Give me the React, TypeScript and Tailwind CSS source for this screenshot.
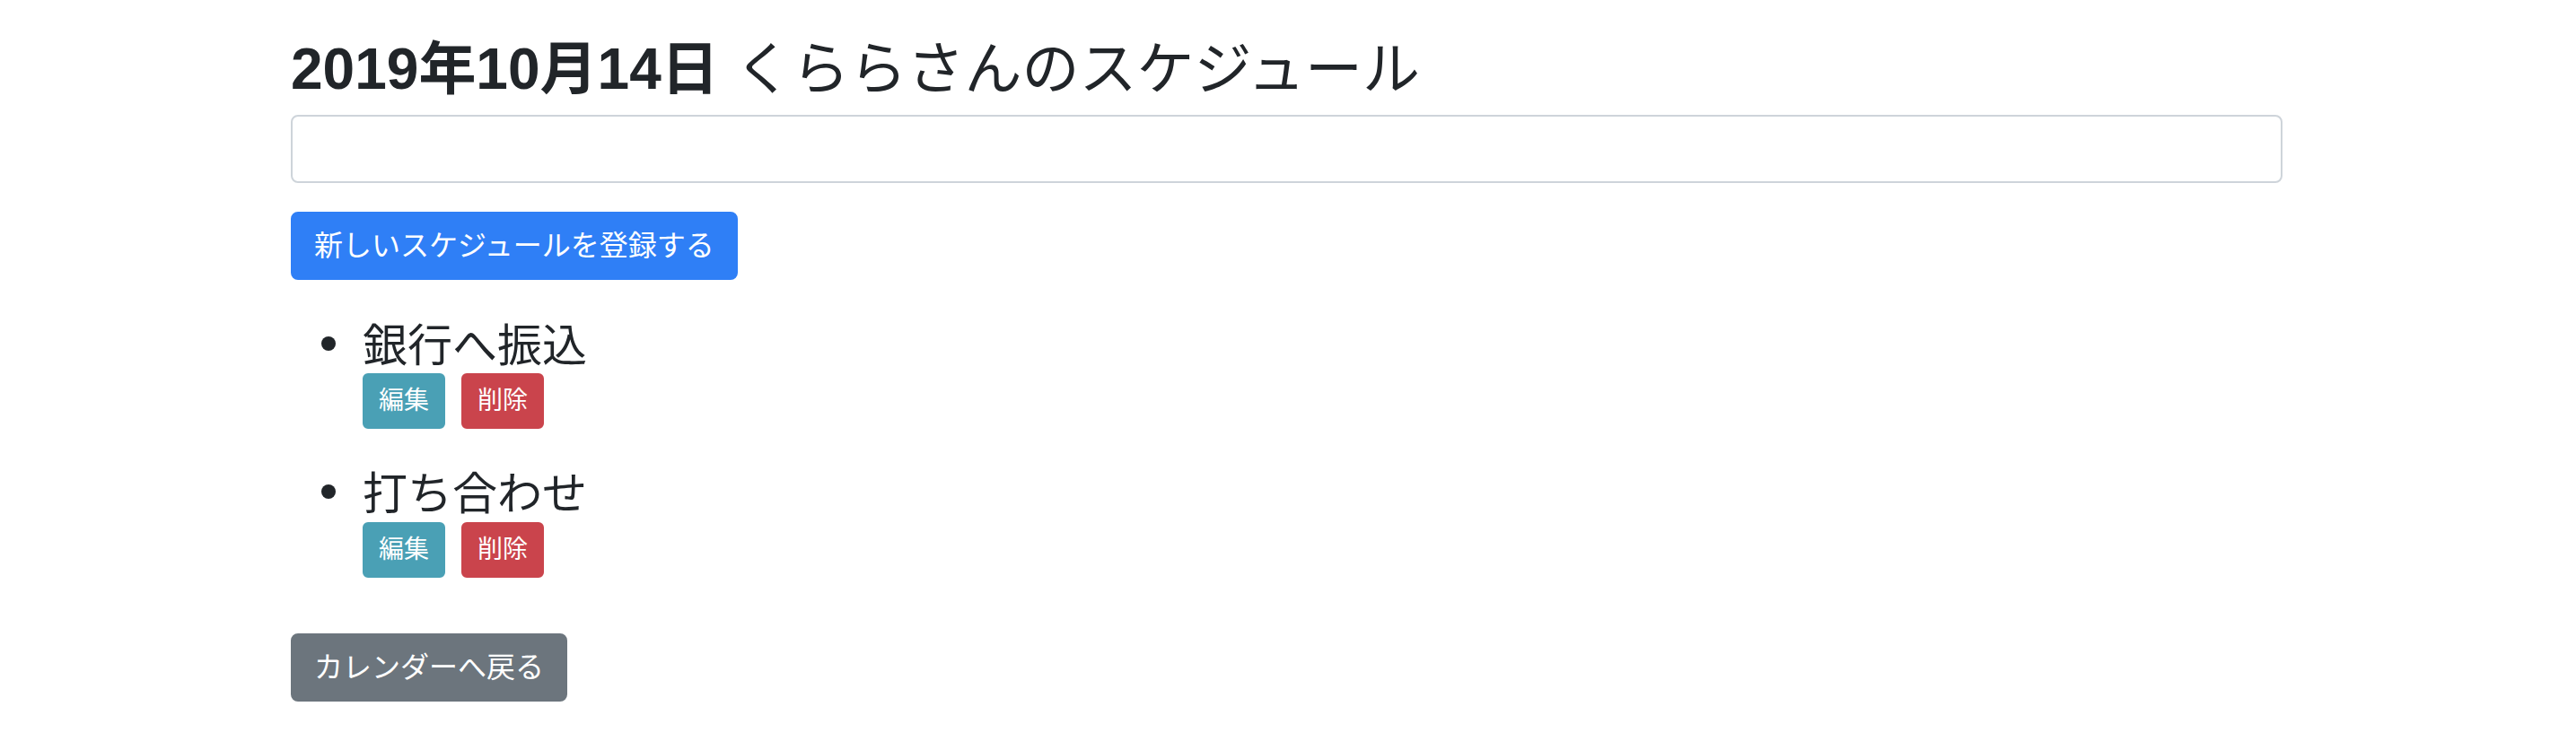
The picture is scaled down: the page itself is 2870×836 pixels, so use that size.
const jp = "font-['Liberation_Sans','Noto_Sans_CJK_JP',sans-serif]";

interface Schedule {
  id: number;
  title: string;
}

const schedules: Schedule[] = [
  { id: 1, title: '銀行へ振込' },
  { id: 2, title: '打ち合わせ' },
];

export default function App() {
  return (
    <div className={`min-h-screen bg-white text-[#212529] ${jp}`}>
      <div className="ml-[324px] w-[2219px] pt-[39px]">
        {/* Title */}
        <h2 className="text-[64px] leading-[76.8px] mb-[12px]">
          <span className="font-bold">2019年10月14日</span>{' '}
          <span className="font-normal">くららさんのスケジュール</span>
        </h2>

        {/* New schedule form */}
        <form onSubmit={(e) => e.preventDefault()}>
          <input
            type="text"
            className="block w-full h-[76px] border-2 border-[#ced4da] rounded-[8px] px-[24px] text-[32px] outline-none"
          />
          <button
            type="submit"
            className="mt-[32px] h-[76px] px-[24px] border-2 border-[#2f7ff6] bg-[#2f7ff6] rounded-[8px] text-white text-[32px] leading-[48px]"
          >
            新しいスケジュールを登録する
          </button>
        </form>

        {/* Schedule list */}
        <ul className="list-none pl-[34px] mt-[46px]">
          {schedules.map((s, i) => (
            <li key={s.id} className={`flex ${i > 0 ? 'mt-[45px]' : ''}`}>
              <div className="w-[46px] shrink-0 pt-[17px]">
                <div className="w-[16px] h-[16px] rounded-full bg-[#212529]" />
              </div>
              <div>
                <div className="text-[50px] leading-[57.6px]">{s.title}</div>
                <div className="flex gap-[18px] mt-px">
                  <button className="h-[62px] px-[16px] border-2 border-[#4aa0b5] bg-[#4aa0b5] rounded-[6px] text-white text-[28px] leading-[42px]">
                    編集
                  </button>
                  <button className="h-[62px] px-[16px] border-2 border-[#ca444c] bg-[#ca444c] rounded-[6px] text-white text-[28px] leading-[42px]">
                    削除
                  </button>
                </div>
              </div>
            </li>
          ))}
        </ul>

        <button className="mt-[62px] h-[76px] px-[24px] border-2 border-[#6c757d] bg-[#6c757d] rounded-[8px] text-white text-[32px] leading-[48px]">
          カレンダーへ戻る
        </button>
      </div>
    </div>
  );
}
